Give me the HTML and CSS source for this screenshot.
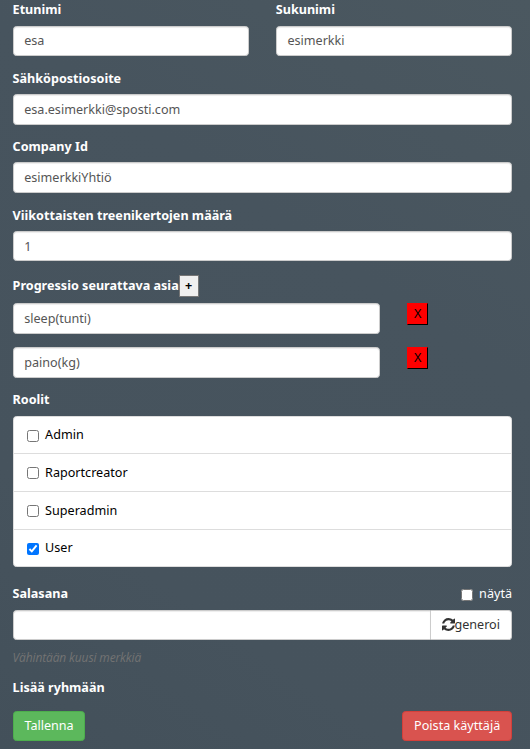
FILE: index.html
```html
<!DOCTYPE html>
<html lang="fi">
<head>
<meta charset="utf-8">
<title>Käyttäjä</title>
<link rel="stylesheet" href="styles.css">
</head>
<body>
<form class="user-form">
  <div class="columns">
    <div class="group"><label class="label" for="first">Etunimi</label><input class="control" id="first" value="esa"></div>
    <div class="group"><label class="label" for="last">Sukunimi</label><input class="control" id="last" value="esimerkki"></div>
  </div>
  <div class="group"><label class="label" for="email">Sähköpostiosoite</label><input class="control" id="email" value="esa.esimerkki@sposti.com"></div>
  <div class="group"><label class="label" for="company">Company Id</label><input class="control" id="company" value="esimerkkiYhtiö"></div>
  <div class="group"><label class="label" for="weekly">Viikottaisten treenikertojen määrä</label><input class="control" id="weekly" value="1"></div>
  <div class="progress-head"><span class="label">Progressio seurattava asia</span><button class="add" type="button">+</button></div>
  <div class="progress-row"><input class="control" value="sleep(tunti)"><button class="remove" type="button">X</button></div>
  <div class="progress-row"><input class="control" value="paino(kg)"><button class="remove" type="button">X</button></div>
  <div class="label">Roolit</div>
  <div class="roles">
    <label class="role"><input class="check" type="checkbox">Admin</label>
    <label class="role"><input class="check" type="checkbox">Raportcreator</label>
    <label class="role"><input class="check" type="checkbox">Superadmin</label>
    <label class="role"><input class="check" type="checkbox" checked>User</label>
  </div>
  <div class="password-head"><label class="label" for="password">Salasana</label><label class="show"><input class="check" type="checkbox">näytä</label></div>
  <div class="password-row">
    <input class="control" id="password" type="password">
    <button class="generate" type="button"><svg class="refresh" viewBox="0 0 1536 1536"><path d="M1511 928q0 5-1 7-64 268-268 434.500T764 1536q-146 0-282.500-55T238 1324l-129 129q-19 19-45 19t-45-19-19-45V960q0-26 19-45t45-19h448q26 0 45 19t19 45-19 45l-137 137q71 66 161 102t187 36q134 0 250-65t186-179q11-17 53-117 8-23 30-23h192q13 0 22.500 9.500t9.500 22.500zm25-800v448q0 26-19 45t-45 19h-448q-26 0-45-19t-19-45 19-45l138-138Q969 256 768 256q-134 0-250 65T332 500q-11 17-53 117-8 23-30 23H50q-13 0-22.500-9.500T18 608v-7q65-268 270-434.500T768 0q146 0 284 55.500T1297 212l130-129q19-19 45-19t45 19 19 45z"/></svg>generoi</button>
  </div>
  <p class="hint">Vähintään kuusi merkkiä</p>
  <div class="label group-label">Lisää ryhmään</div>
  <div class="actions"><button class="btn save" type="button">Tallenna</button><button class="btn delete" type="button">Poista käyttäjä</button></div>
</form>
</body>
</html>
```
FILE: styles.css
```css
* { box-sizing: border-box; }
body {
  margin: 0;
  height: 749px;
  overflow: hidden;
  background: linear-gradient(215deg, #4b5860 0%, #47545e 35%, #46535d 75%, #43505a 100%);
  color: #fff;
  font: 12.6px/18px "Noto Sans", sans-serif;
}
input, button { font: inherit; margin: 0; }
.user-form { padding: 1.4px 18px 0 12.6px; }
.columns { display: grid; grid-template-columns: 1fr 1fr; gap: 27px; }
.group { margin-bottom: 13.5px; }
.label { display: block; height: 19.8px; margin-bottom: 4.5px; line-height: 17px; font-weight: 700; }
.control {
  display: block;
  width: 100%;
  height: 30.6px;
  padding: 4.4px 10.6px 4.2px;
  border: 1px solid #ccc;
  border-radius: 3.6px;
  background: #fff;
  color: #555;
  box-shadow: inset 0 1px 1px rgba(0, 0, 0, .075);
}
.columns .control { padding-top: 4px; padding-bottom: 5px; }
.progress-head { display: flex; height: 28.2px; }
.progress-head .label { line-height: 21px; }
.add {
  width: 20px;
  height: 22px;
  padding: 0;
  border: 1px solid #767676;
  background: #efefef;
  color: #000;
  font-weight: 700;
  line-height: 18px;
}
.progress-row { display: grid; grid-template-columns: 367.6px 21px; column-gap: 27px; margin-bottom: 13.5px; }
.remove {
  width: 21px;
  height: 22px;
  padding: 0;
  border: 1px solid #000;
  border-top-color: #f00;
  border-left-color: #f00;
  background: #f00;
  color: #000;
  line-height: 18px;
}
.roles { height: 151.2px; margin-bottom: 18px; border: 1px solid #ddd; border-radius: 3.6px; background: #fff; color: #000; }
.role { display: flex; align-items: center; height: 37.8px; padding: 0 13px 0; border-bottom: 1px solid #ddd; }
.role:last-child { height: 36px; border-bottom: 0; }
.check { width: 12px; height: 12px; margin: 1px 6.5px 0 0; accent-color: #0075ff; }
.password-head { display: flex; justify-content: space-between; height: 24.9px; }
.show { display: flex; align-items: center; height: 19px; }
.show .check { margin-right: 6px; }
.password-row { display: flex; }
.password-row .control { flex: 1; height: 30px; border-radius: 3.6px 0 0 3.6px; }
.generate {
  display: flex;
  align-items: center;
  height: 30px;
  padding: 0 11px 0 10.5px;
  border: 1px solid #ccc;
  border-left: 0;
  border-radius: 0 3.6px 3.6px 0;
  background: #fff;
  color: #333;
}
.refresh { width: 13px; height: 13px; margin: 0 -.5px 1px .5px; fill: #333; }
.hint { margin: 9px 0 12px; font-family: "Open Sans", "Noto Sans", sans-serif; font-size: 12px; font-style: italic; letter-spacing: -.13px; color: #737373; }
.group-label { margin-bottom: 12px; }
.actions { display: flex; justify-content: space-between; }
.btn { height: 30px; padding: 0 10.8px; border: 1px solid; border-radius: 3.6px; color: #fff; }
.save { background: #5cb85c; border-color: #4cae4c; }
.delete { background: #d9534f; border-color: #d43f3a; }
```
